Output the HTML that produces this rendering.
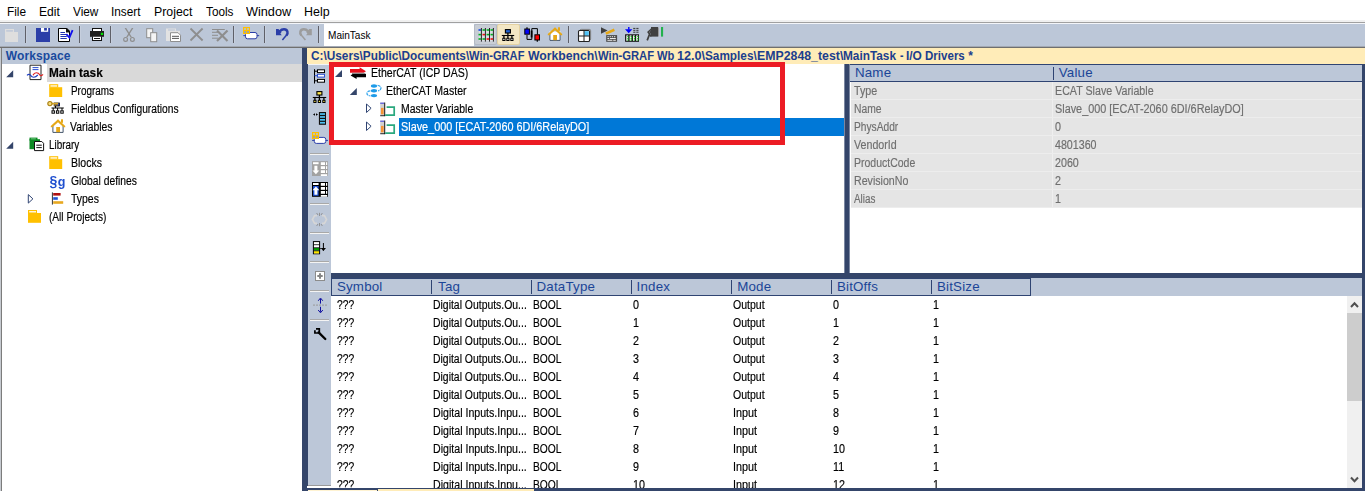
<!DOCTYPE html>
<html><head><meta charset="utf-8"><title>Win-GRAF Workbench</title>
<style>
html,body{margin:0;padding:0;}
body{width:1365px;height:491px;position:relative;overflow:hidden;background:#fff;font-family:"Liberation Sans",sans-serif;}
#app{position:absolute;left:0;top:0;width:1365px;height:491px;overflow:hidden;background:#fff;}
.ms{position:absolute;-webkit-text-stroke:0.18px;font-size:12.5px;line-height:18px;height:18px;white-space:pre;transform-origin:0 50%;display:block;}
.ms.b{font-weight:bold;}
.hd{position:absolute;letter-spacing:0.2px;font-size:13.33px;line-height:18px;height:18px;white-space:pre;color:#1B4597;display:block;}
.mn{position:absolute;font-size:12px;line-height:16px;top:4px;white-space:pre;color:#000;transform-origin:0 50%;display:block;}
.pb{position:absolute;font-size:12px;font-weight:bold;line-height:17px;white-space:pre;color:#1C3E8E;}
svg{position:absolute;overflow:visible;}
.gl{position:absolute;left:0;top:0;width:1365px;height:491px;will-change:transform;}
</style></head><body><div id="app">
<div style="position:absolute;left:0px;top:0px;width:1365px;height:20px;background:#fff;"></div>
<div style="position:absolute;left:0px;top:20px;width:1365px;height:2px;background:#F0F0F0;"></div>
<div style="position:absolute;left:0px;top:22px;width:1365px;height:1px;background:#A0A0A0;"></div>
<div style="position:absolute;left:0px;top:23px;width:1365px;height:1px;background:#F3F5F9;"></div>
<span class="mn" style="left:6.6px;transform:scaleX(0.9869)">File</span>
<span class="mn" style="left:38.6px;transform:scaleX(1.0062)">Edit</span>
<span class="mn" style="left:72.7px;transform:scaleX(0.9840)">View</span>
<span class="mn" style="left:111.4px;transform:scaleX(0.9822)">Insert</span>
<span class="mn" style="left:154.2px;transform:scaleX(1.0263)">Project</span>
<span class="mn" style="left:205.5px;transform:scaleX(0.9808)">Tools</span>
<span class="mn" style="left:246.2px;transform:scaleX(1.0583)">Window</span>
<span class="mn" style="left:304.2px;transform:scaleX(1.0349)">Help</span>
<div style="position:absolute;left:0px;top:24px;width:1365px;height:22px;background:#BCC7D8;"></div>
<div style="position:absolute;left:0px;top:46px;width:1365px;height:1px;background:#A3A9B3;"></div>
<div style="position:absolute;left:0px;top:47px;width:1365px;height:1px;background:#6F6F6F;"></div>
<div style="position:absolute;left:25px;top:26px;width:1px;height:17px;background:#5F6068;"></div>
<div style="position:absolute;left:26px;top:26px;width:1px;height:17px;background:#C6CFDE;"></div>
<div style="position:absolute;left:79px;top:26px;width:1px;height:17px;background:#5F6068;"></div>
<div style="position:absolute;left:80px;top:26px;width:1px;height:17px;background:#C6CFDE;"></div>
<div style="position:absolute;left:110px;top:26px;width:1px;height:17px;background:#5F6068;"></div>
<div style="position:absolute;left:111px;top:26px;width:1px;height:17px;background:#C6CFDE;"></div>
<div style="position:absolute;left:233px;top:26px;width:1px;height:17px;background:#5F6068;"></div>
<div style="position:absolute;left:234px;top:26px;width:1px;height:17px;background:#C6CFDE;"></div>
<div style="position:absolute;left:264px;top:26px;width:1px;height:17px;background:#5F6068;"></div>
<div style="position:absolute;left:265px;top:26px;width:1px;height:17px;background:#C6CFDE;"></div>
<div style="position:absolute;left:318px;top:26px;width:1px;height:17px;background:#5F6068;"></div>
<div style="position:absolute;left:319px;top:26px;width:1px;height:17px;background:#C6CFDE;"></div>
<div style="position:absolute;left:568px;top:26px;width:1px;height:17px;background:#5F6068;"></div>
<div style="position:absolute;left:569px;top:26px;width:1px;height:17px;background:#C6CFDE;"></div>
<div style="position:absolute;left:324px;top:24px;width:150px;height:22px;background:#fff;"></div>
<span style="position:absolute;left:327.5px;top:27px;font-size:10.6px;line-height:16px;color:#000;white-space:pre;transform:scaleX(0.95);transform-origin:0 50%">MainTask</span>
<div style="position:absolute;left:474px;top:24px;width:23px;height:21px;background:#C8CDD5;box-sizing:border-box;border:1px solid #B4BAC4;border-radius:2px;"></div>
<div style="position:absolute;left:497px;top:24px;width:23px;height:21px;background:#F3E7C4;box-sizing:border-box;border:1px solid #E3D1A2;border-radius:2px;"></div>
<div style="position:absolute;left:0px;top:48px;width:1px;height:443px;background:#C6CAD0;"></div>
<div style="position:absolute;left:1px;top:48px;width:1px;height:443px;background:#7C7C7C;"></div>
<div style="position:absolute;left:2px;top:48px;width:300px;height:16px;background:#BCC7D8;"></div>
<span class="pb" style="left:5.8px;top:47.8px;color:#1A4A9E;letter-spacing:0.1px">Workspace</span>
<div style="position:absolute;left:2px;top:64px;width:300px;height:427px;background:#fff;"></div>
<div style="position:absolute;left:47px;top:64px;width:255px;height:18px;background:#D9D9D9;"></div>
<div style="position:absolute;left:302px;top:48px;width:5px;height:443px;background:#34456A;"></div>
<div style="position:absolute;left:307px;top:64px;width:1px;height:427px;background:#34456A;"></div>
<div style="position:absolute;left:307px;top:48px;width:1058px;height:16px;background:#FFECB8;"></div>
<span class="pb" style="left:311.20px;top:47.8px;transform:scaleX(0.9844);transform-origin:0 50%;display:block">C:\Users\Public\Documents\</span>
<span class="pb" style="left:469.40px;top:47.8px;transform:scaleX(0.9255);transform-origin:0 50%;display:block">Win-GRAF </span>
<span class="pb" style="left:527.90px;top:47.8px;transform:scaleX(1.0182);transform-origin:0 50%;display:block">Workbench\</span>
<span class="pb" style="left:597.60px;top:47.8px;transform:scaleX(0.9365);transform-origin:0 50%;display:block">Win-GRAF </span>
<span class="pb" style="left:656.80px;top:47.8px;transform:scaleX(0.9277);transform-origin:0 50%;display:block">Wb </span>
<span class="pb" style="left:677.20px;top:47.8px;transform:scaleX(1.0528);transform-origin:0 50%;display:block">12.0\</span>
<span class="pb" style="left:705.30px;top:47.8px;transform:scaleX(0.9811);transform-origin:0 50%;display:block">Samples\</span>
<span class="pb" style="left:757.00px;top:47.8px;transform:scaleX(1.0268);transform-origin:0 50%;display:block">EMP2848_test\</span>
<span class="pb" style="left:843.30px;top:47.8px;transform:scaleX(0.9855);transform-origin:0 50%;display:block">MainTask </span>
<span class="pb" style="left:899.60px;top:47.8px;transform:scaleX(0.8731);transform-origin:0 50%;display:block">- </span>
<span class="pb" style="left:906.00px;top:47.8px;transform:scaleX(0.9930);transform-origin:0 50%;display:block">I/O </span>
<span class="pb" style="left:925.20px;top:47.8px;transform:scaleX(0.9621);transform-origin:0 50%;display:block">Drivers </span>
<span class="pb" style="left:968.20px;top:47.8px;transform:scaleX(1.0000);transform-origin:0 50%;display:block">*</span>
<div style="position:absolute;left:308px;top:64px;width:23px;height:422px;background:#BCC7D8;"></div>
<div style="position:absolute;left:308px;top:64px;width:23px;height:1px;background:#F2F4F8;"></div>
<div style="position:absolute;left:308px;top:485px;width:23px;height:1px;background:#9A9A9A;"></div>
<div style="position:absolute;left:310px;top:153px;width:19px;height:1px;background:#A8A8A8;"></div>
<div style="position:absolute;left:310px;top:154px;width:19px;height:1px;background:#F4F4F4;"></div>
<div style="position:absolute;left:310px;top:203px;width:19px;height:1px;background:#A8A8A8;"></div>
<div style="position:absolute;left:310px;top:204px;width:19px;height:1px;background:#F4F4F4;"></div>
<div style="position:absolute;left:310px;top:232px;width:19px;height:1px;background:#A8A8A8;"></div>
<div style="position:absolute;left:310px;top:233px;width:19px;height:1px;background:#F4F4F4;"></div>
<div style="position:absolute;left:310px;top:261px;width:19px;height:1px;background:#A8A8A8;"></div>
<div style="position:absolute;left:310px;top:262px;width:19px;height:1px;background:#F4F4F4;"></div>
<div style="position:absolute;left:310px;top:290px;width:19px;height:1px;background:#A8A8A8;"></div>
<div style="position:absolute;left:310px;top:291px;width:19px;height:1px;background:#F4F4F4;"></div>
<div style="position:absolute;left:310px;top:319px;width:19px;height:1px;background:#A8A8A8;"></div>
<div style="position:absolute;left:310px;top:320px;width:19px;height:1px;background:#F4F4F4;"></div>
<div style="position:absolute;left:331px;top:64px;width:513px;height:209px;background:#fff;"></div>
<div style="position:absolute;left:399px;top:118px;width:445px;height:18px;background:#0078D7;"></div>
<div style="position:absolute;left:844px;top:64px;width:1px;height:209px;background:#7B87A1;"></div>
<div style="position:absolute;left:845px;top:64px;width:4px;height:209px;background:#34456A;"></div>
<div style="position:absolute;left:849px;top:64px;width:1px;height:209px;background:#7B87A1;"></div>
<div style="position:absolute;left:850px;top:64px;width:512px;height:209px;background:#fff;"></div>
<div style="position:absolute;left:850px;top:64px;width:512px;height:18px;background:#2F4472;"></div>
<div style="position:absolute;left:850px;top:65px;width:512px;height:16px;background:#BCC7D8;"></div>
<div style="position:absolute;left:1053px;top:67px;width:1px;height:13px;background:#2F4472;"></div>
<span class="hd" style="left:854.9px;top:64.0px">Name</span>
<span class="hd" style="left:1058.7px;top:64.0px">Value</span>
<div style="position:absolute;left:851px;top:82px;width:512px;height:17px;background:#E5E5E5;"></div>
<div style="position:absolute;left:851px;top:99px;width:512px;height:1px;background:#EDEDED;"></div>
<div style="position:absolute;left:1052px;top:82px;width:1px;height:17px;background:#EFEFEF;"></div>
<div style="position:absolute;left:851px;top:100px;width:512px;height:17px;background:#E5E5E5;"></div>
<div style="position:absolute;left:851px;top:117px;width:512px;height:1px;background:#EDEDED;"></div>
<div style="position:absolute;left:1052px;top:100px;width:1px;height:17px;background:#EFEFEF;"></div>
<div style="position:absolute;left:851px;top:118px;width:512px;height:17px;background:#E5E5E5;"></div>
<div style="position:absolute;left:851px;top:135px;width:512px;height:1px;background:#EDEDED;"></div>
<div style="position:absolute;left:1052px;top:118px;width:1px;height:17px;background:#EFEFEF;"></div>
<div style="position:absolute;left:851px;top:136px;width:512px;height:17px;background:#E5E5E5;"></div>
<div style="position:absolute;left:851px;top:153px;width:512px;height:1px;background:#EDEDED;"></div>
<div style="position:absolute;left:1052px;top:136px;width:1px;height:17px;background:#EFEFEF;"></div>
<div style="position:absolute;left:851px;top:154px;width:512px;height:17px;background:#E5E5E5;"></div>
<div style="position:absolute;left:851px;top:171px;width:512px;height:1px;background:#EDEDED;"></div>
<div style="position:absolute;left:1052px;top:154px;width:1px;height:17px;background:#EFEFEF;"></div>
<div style="position:absolute;left:851px;top:172px;width:512px;height:17px;background:#E5E5E5;"></div>
<div style="position:absolute;left:851px;top:189px;width:512px;height:1px;background:#EDEDED;"></div>
<div style="position:absolute;left:1052px;top:172px;width:1px;height:17px;background:#EFEFEF;"></div>
<div style="position:absolute;left:851px;top:190px;width:512px;height:17px;background:#E5E5E5;"></div>
<div style="position:absolute;left:851px;top:207px;width:512px;height:1px;background:#EDEDED;"></div>
<div style="position:absolute;left:1052px;top:190px;width:1px;height:17px;background:#EFEFEF;"></div>
<div style="position:absolute;left:1362px;top:64px;width:3px;height:427px;background:#34456A;"></div>
<div style="position:absolute;left:331px;top:273px;width:1034px;height:5px;background:#34456A;"></div>
<div style="position:absolute;left:331px;top:278px;width:1031px;height:18px;background:#BCC7D8;"></div>
<div style="position:absolute;left:331px;top:278px;width:700px;height:18px;background:#2F4472;"></div>
<div style="position:absolute;left:332px;top:279px;width:698px;height:16px;background:#BCC7D8;"></div>
<div style="position:absolute;left:431px;top:280px;width:1px;height:14px;background:#2F4472;"></div>
<div style="position:absolute;left:531px;top:280px;width:1px;height:14px;background:#2F4472;"></div>
<div style="position:absolute;left:631px;top:280px;width:1px;height:14px;background:#2F4472;"></div>
<div style="position:absolute;left:731px;top:280px;width:1px;height:14px;background:#2F4472;"></div>
<div style="position:absolute;left:831px;top:280px;width:1px;height:14px;background:#2F4472;"></div>
<div style="position:absolute;left:931px;top:280px;width:1px;height:14px;background:#2F4472;"></div>
<span class="hd" style="left:336.9px;top:278.3px">Symbol</span>
<span class="hd" style="left:438.1px;top:278.3px">Tag</span>
<span class="hd" style="left:536.5px;top:278.3px">DataType</span>
<span class="hd" style="left:636.6px;top:278.3px">Index</span>
<span class="hd" style="left:737.2px;top:278.3px">Mode</span>
<span class="hd" style="left:836.9px;top:278.3px">BitOffs</span>
<span class="hd" style="left:936.9px;top:278.3px">BitSize</span>
<div style="position:absolute;left:331px;top:296px;width:1016px;height:192px;background:#fff;"></div>
<div style="position:absolute;left:1347px;top:296px;width:15px;height:192px;background:#F0F0F0;"></div>
<div style="position:absolute;left:1347px;top:313px;width:15px;height:88px;background:#CDCDCD;"></div>
<svg style="left:1347px;top:296px" width="15" height="17" viewBox="0 0 15 17"><path d="M4 11 L7.5 7.2 L11 11" fill="none" stroke="#505050" stroke-width="2"/></svg>
<svg style="left:1347px;top:471px" width="15" height="17" viewBox="0 0 15 17"><path d="M4 6.5 L7.5 10.3 L11 6.5" fill="none" stroke="#505050" stroke-width="2"/></svg>
<div style="position:absolute;left:307px;top:486px;width:24px;height:2px;background:#fff;"></div>
<div style="position:absolute;left:329px;top:62px;width:456px;height:83px;box-sizing:border-box;border:5px solid #EC1C24;"></div>
<svg style="left:0;top:0" width="1365" height="491" viewBox="0 0 1365 491"><rect x="5" y="29" width="9" height="3" fill="#DEDEDE" /><rect x="5" y="32" width="13" height="10" fill="#DEDEDE" /><rect x="6.2" y="30.2" width="6.7" height="1.4" fill="#BCC6D8" /><rect x="36" y="28" width="14" height="14" fill="#2B3EA8" /><rect x="41" y="28" width="7.2" height="3.8" fill="#fff" /><rect x="44.1" y="28" width="2.8" height="2.6" fill="#2B3EA8" /><path d="M58.5 28.5 H66.5 L69.5 31.5 V41.5 H58.5 Z" fill="#fff" stroke="#000" stroke-width="1" /><path d="M66 28 H67 L70 31 V32.5 H66 Z" fill="#111" /><line x1="60.4" y1="32.5" x2="65" y2="32.5" stroke="#2233B0" stroke-width="1" /><line x1="60.4" y1="34.5" x2="66.8" y2="34.5" stroke="#2233B0" stroke-width="1" /><line x1="60.4" y1="36.5" x2="66.8" y2="36.5" stroke="#2233B0" stroke-width="1" /><line x1="60.4" y1="38.5" x2="66.8" y2="38.5" stroke="#2233B0" stroke-width="1" /><path d="M66.3 34.2 L69.4 37.6 L72.6 30.2" fill="none" stroke="#1010F0" stroke-width="1.8" stroke-linejoin="miter"/><rect x="92" y="28" width="10" height="4" fill="#111" /><rect x="93" y="29" width="8" height="2.2" fill="#fff" /><rect x="90" y="31" width="14" height="5.8" fill="#202020" /><rect x="92" y="36.6" width="10" height="4.4" fill="#111" /><rect x="93" y="36.8" width="8" height="3.2" fill="#fff" /><rect x="94" y="38" width="6" height="1" fill="#111" /><rect x="100.8" y="32.8" width="2.4" height="2.2" fill="#00E000" /><path d="M124.6 28 L126.2 28 L131.8 37 L130.6 37.6 Z" fill="#8E8E8E" /><path d="M133.4 28 L131.8 28 L126.2 37 L127.4 37.6 Z" fill="#8E8E8E" /><circle cx="125.6" cy="39.4" r="1.9" fill="none" stroke="#8E8E8E" stroke-width="1.2"/><circle cx="132.4" cy="39.4" r="1.9" fill="none" stroke="#8E8E8E" stroke-width="1.2"/><rect x="146.7" y="28.7" width="6" height="9" fill="#F4F4F4" stroke="#8E8E8E" stroke-width="1"/><rect x="150.7" y="32.7" width="6" height="9" fill="#F4F4F4" stroke="#8E8E8E" stroke-width="1"/><rect x="166" y="28.5" width="10" height="3" fill="#E2E2E2" /><rect x="166" y="30.8" width="14" height="10.2" fill="#E2E2E2" /><rect x="168" y="29.3" width="7" height="1.4" fill="#C4CCDA" /><path d="M170.5 32.7 H178 L180.5 35.2 V41.5 H170.5 Z" fill="#fff" stroke="#8E8E8E" stroke-width="1" /><line x1="172" y1="36.3" x2="179" y2="36.3" stroke="#555" stroke-width="1" /><line x1="172" y1="38.4" x2="179" y2="38.4" stroke="#555" stroke-width="1" /><line x1="190.5" y1="28.5" x2="202.6" y2="40.5" stroke="#8E8E8E" stroke-width="1.8" /><line x1="202.6" y1="28.5" x2="190.5" y2="40.5" stroke="#8E8E8E" stroke-width="1.8" /><line x1="212" y1="29.5" x2="224.8" y2="29.5" stroke="#8E8E8E" stroke-width="1" /><line x1="212" y1="32.3" x2="218.5" y2="32.3" stroke="#8E8E8E" stroke-width="1" /><line x1="212" y1="35.3" x2="218" y2="35.3" stroke="#8E8E8E" stroke-width="1" /><line x1="212" y1="38.2" x2="218.6" y2="38.2" stroke="#8E8E8E" stroke-width="1" /><line x1="217" y1="30.6" x2="227.5" y2="41" stroke="#8E8E8E" stroke-width="2.1" /><line x1="227.5" y1="30.6" x2="217" y2="41" stroke="#8E8E8E" stroke-width="2.1" /><line x1="243.3" y1="35.65" x2="259.2" y2="35.65" stroke="#2B3EA8" stroke-width="1" /><rect x="245.5" y="32.5" width="11.5" height="6.3" fill="#fff" rx="2" ry="2" stroke="#2B3EA8" stroke-width="1"/><rect x="243" y="27" width="7" height="7" fill="#FFC000" /><rect x="244.1" y="28.1" width="1.8" height="1.8" fill="#B9C2D2" /><rect x="247.1" y="28.1" width="1.8" height="1.8" fill="#B9C2D2" /><rect x="244.1" y="31.1" width="1.8" height="1.8" fill="#8E9CC4" /><rect x="247.1" y="31.1" width="1.8" height="1.8" fill="#8E9CC4" /><g transform="translate(276,28)"><path d="M0 1 L0 7.2 L5.8 7.2 L4.4 5.6 L5.6 4 L2.4 1 Z" fill="#2B3EA8"/><path d="M3.8 3.2 C6 0.6 10.4 0.4 11.4 3.6 C11.9 5.2 11.4 6.4 10.4 7.4" fill="none" stroke="#2B3EA8" stroke-width="2.5"/><path d="M11 6.6 L6.4 12" fill="none" stroke="#2B3EA8" stroke-width="1.5"/></g><g transform="translate(311.8,28) scale(-1,1)"><path d="M0 1 L0 7.2 L5.8 7.2 L4.4 5.6 L5.6 4 L2.4 1 Z" fill="#9C9C9C"/><path d="M3.8 3.2 C6 0.6 10.4 0.4 11.4 3.6 C11.9 5.2 11.4 6.4 10.4 7.4" fill="none" stroke="#9C9C9C" stroke-width="2.5"/><path d="M11 6.6 L6.4 12" fill="none" stroke="#9C9C9C" stroke-width="1.5"/></g><rect x="479" y="29" width="15.5" height="12" fill="#DADDE2" /><rect x="478.5" y="29.2" width="2.4" height="1.6" fill="#1040E0" /><rect x="478.5" y="33.8" width="2.4" height="1.6" fill="#00B020" /><rect x="478.5" y="38.2" width="2.4" height="1.6" fill="#00B020" /><line x1="481.4" y1="28" x2="481.4" y2="41.6" stroke="#111" stroke-width="0.9" /><rect x="482.5" y="29.2" width="2.4" height="1.6" fill="#00B020" /><rect x="482.5" y="33.8" width="2.4" height="1.6" fill="#F01010" /><rect x="482.5" y="38.2" width="2.4" height="1.6" fill="#00B020" /><line x1="485.4" y1="28" x2="485.4" y2="41.6" stroke="#111" stroke-width="0.9" /><rect x="486.6" y="29.2" width="2.4" height="1.6" fill="#00B020" /><rect x="486.6" y="33.8" width="2.4" height="1.6" fill="#00B020" /><rect x="486.6" y="38.2" width="2.4" height="1.6" fill="#F01010" /><line x1="489.5" y1="28" x2="489.5" y2="41.6" stroke="#111" stroke-width="0.9" /><rect x="490.5" y="29.2" width="2.4" height="1.6" fill="#00B020" /><rect x="490.5" y="33.8" width="2.4" height="1.6" fill="#00B020" /><rect x="490.5" y="38.2" width="2.4" height="1.6" fill="#F01010" /><line x1="493.4" y1="28" x2="493.4" y2="41.6" stroke="#111" stroke-width="0.9" /><rect x="505.4" y="29.6" width="5" height="3.4" fill="#2060D0" stroke="#000" stroke-width="1.1"/><line x1="507.9" y1="33.0" x2="507.9" y2="35.6" stroke="#000" stroke-width="1.3" /><line x1="501.79999999999995" y1="35.5" x2="514.1999999999999" y2="35.5" stroke="#000" stroke-width="1.1" /><line x1="503.9" y1="35.6" x2="503.9" y2="38.1" stroke="#000" stroke-width="1.3" /><rect x="502.29999999999995" y="37.8" width="3.2" height="3.2" fill="#000" /><rect x="503.29999999999995" y="38.8" width="1.2" height="1.2" fill="#fff" /><line x1="507.9" y1="35.6" x2="507.9" y2="38.1" stroke="#000" stroke-width="1.3" /><rect x="506.29999999999995" y="37.8" width="3.2" height="3.2" fill="#000" /><rect x="507.29999999999995" y="38.8" width="1.2" height="1.2" fill="#fff" /><line x1="511.9" y1="35.6" x2="511.9" y2="38.1" stroke="#000" stroke-width="1.3" /><rect x="510.29999999999995" y="37.8" width="3.2" height="3.2" fill="#000" /><rect x="511.29999999999995" y="38.8" width="1.2" height="1.2" fill="#fff" /><path d="M527 35 V39.4 H531.8 V28.6 H537.4 V34.5" fill="none" stroke="#000" stroke-width="1" /><line x1="531.6" y1="30.5" x2="531.6" y2="37.5" stroke="#000" stroke-width="1.8" /><rect x="524.8" y="29" width="4.6" height="5.2" fill="#0000FF" stroke="#000" stroke-width="1"/><line x1="527" y1="27.3" x2="527" y2="29" stroke="#000" stroke-width="1.2" /><rect x="534.9" y="34.8" width="4.6" height="5.2" fill="#FF0000" stroke="#000" stroke-width="1"/><line x1="537.3" y1="40" x2="537.3" y2="41.8" stroke="#000" stroke-width="1.2" /><rect x="549.4" y="31.5" width="11.1" height="9.2" fill="#fff" /><path d="M549.9 34 V40.4 H560.1 V34" fill="none" stroke="#44546A" stroke-width="1" /><rect x="553.2" y="35" width="3.8" height="5.2" fill="#E6A817" /><rect x="558" y="27.3" width="2" height="3.5" fill="#E6A817" /><path d="M555 27.2 L562.2 34 L562.2 35.2 L560.6 35.2 L555 30.2 L549.4 35.2 L547.8 35.2 L547.8 34 Z" fill="#E6A817" /><rect x="580" y="29.4" width="10.6" height="10.8" fill="#F2F2F2" rx="1.2" stroke="#555" stroke-width="0.7"/><rect x="578.5" y="30.5" width="11" height="11" fill="#fff" rx="1" stroke="#222" stroke-width="1.1"/><rect x="584.2" y="31.2" width="4.6" height="4.6" fill="#4FC3F7" /><line x1="584" y1="30.5" x2="584" y2="41.5" stroke="#222" stroke-width="1" /><line x1="578.5" y1="36" x2="589.5" y2="36" stroke="#222" stroke-width="1" /><path d="M601 27.2 L607.6 30.4 L601 33.7 Z" fill="#404040" /><line x1="605.8" y1="33.6" x2="614.4" y2="29.8" stroke="#E6A817" stroke-width="2.6" /><rect x="606.2" y="35.1" width="10.9" height="6.7" fill="#4A4A4A" /><rect x="607.4" y="36.2" width="1.3" height="1" fill="#E8E8E8" /><rect x="609.6" y="36.2" width="1.3" height="1" fill="#E8E8E8" /><rect x="611.8" y="36.2" width="1.3" height="1" fill="#E8E8E8" /><rect x="614" y="36.2" width="1.3" height="1" fill="#E8E8E8" /><rect x="607.4" y="38" width="1.6" height="1" fill="#E8E8E8" /><rect x="609.8" y="38" width="6" height="1" fill="#E8E8E8" /><rect x="607.4" y="39.8" width="5" height="1" fill="#E8E8E8" /><rect x="613.2" y="39.8" width="2.6" height="1" fill="#E8E8E8" /><rect x="628.1" y="27" width="1.4" height="2.6" fill="#0000FF" /><path d="M625 29.3 H632.4 L628.7 33.2 Z" fill="#0000FF" /><line x1="633.2" y1="28.4" x2="638.8" y2="28.4" stroke="#333" stroke-width="1" stroke-dasharray="2.2 0.9"/><line x1="633.2" y1="30.3" x2="638.8" y2="30.3" stroke="#333" stroke-width="1" stroke-dasharray="2.2 0.9"/><line x1="633.2" y1="32.2" x2="638.8" y2="32.2" stroke="#333" stroke-width="1" stroke-dasharray="2.2 0.9"/><rect x="625.1" y="34.3" width="13.9" height="7.5" fill="#111" /><rect x="626.3" y="35.4" width="1.9" height="5.4" fill="#fff" /><rect x="627.1999999999999" y="36.2" width="1.5" height="0.9" fill="#00B000" /><rect x="627.1999999999999" y="37.9" width="1.5" height="0.9" fill="#00B000" /><rect x="627.1999999999999" y="39.6" width="1.5" height="0.9" fill="#00B000" /><rect x="629.6" y="35.4" width="1.9" height="5.4" fill="#fff" /><rect x="630.5" y="36.2" width="1.5" height="0.9" fill="#00B000" /><rect x="630.5" y="37.9" width="1.5" height="0.9" fill="#00B000" /><rect x="630.5" y="39.6" width="1.5" height="0.9" fill="#00B000" /><rect x="632.9" y="35.4" width="1.9" height="5.4" fill="#fff" /><rect x="633.8" y="36.2" width="1.5" height="0.9" fill="#00B000" /><rect x="633.8" y="37.9" width="1.5" height="0.9" fill="#00B000" /><rect x="633.8" y="39.6" width="1.5" height="0.9" fill="#00B000" /><rect x="636.2" y="35.4" width="1.9" height="5.4" fill="#fff" /><rect x="637.1" y="36.2" width="1.5" height="0.9" fill="#00B000" /><rect x="637.1" y="37.9" width="1.5" height="0.9" fill="#00B000" /><rect x="637.1" y="39.6" width="1.5" height="0.9" fill="#00B000" /><rect x="651" y="27" width="7" height="9.6" fill="#404040" /><rect x="658" y="27.5" width="1" height="9" fill="#9A9A9A" /><path d="M652.5 28 L648.2 32 L649.6 34 L647.2 40.4" fill="none" stroke="#404040" stroke-width="1.7" /><path d="M651 31 L649.6 34.2 L651 36.6" fill="none" stroke="#404040" stroke-width="1.4" /><rect x="661" y="27" width="2.1" height="9.6" fill="#22B14C" /><line x1="314.5" y1="69.2" x2="314.5" y2="83.5" stroke="#000" stroke-width="1" /><rect x="317.5" y="69.8" width="7" height="2.8" fill="#fff" stroke="#000" stroke-width="1"/><line x1="314.5" y1="71.2" x2="317.5" y2="71.2" stroke="#000" stroke-width="1" /><rect x="317.5" y="74.3" width="7" height="2.8" fill="#fff" stroke="#2B4FD0" stroke-width="1"/><line x1="314.5" y1="75.7" x2="317.5" y2="75.7" stroke="#2B4FD0" stroke-width="1" /><rect x="317.5" y="79.4" width="7" height="2.8" fill="#fff" stroke="#000" stroke-width="1"/><line x1="314.5" y1="80.8" x2="317.5" y2="80.8" stroke="#000" stroke-width="1" /><rect x="316.9" y="91.6" width="5" height="3.4" fill="#FFE84A" stroke="#000" stroke-width="1.1"/><line x1="319.4" y1="95.0" x2="319.4" y2="97.6" stroke="#000" stroke-width="1.3" /><line x1="312.79999999999995" y1="97.5" x2="326.2" y2="97.5" stroke="#000" stroke-width="1.1" /><line x1="314.9" y1="97.6" x2="314.9" y2="100.1" stroke="#000" stroke-width="1.3" /><rect x="313.29999999999995" y="99.8" width="3.2" height="3.2" fill="#000" /><rect x="314.29999999999995" y="100.8" width="1.2" height="1.2" fill="#FFE84A" /><line x1="319.4" y1="97.6" x2="319.4" y2="100.1" stroke="#000" stroke-width="1.3" /><rect x="317.79999999999995" y="99.8" width="3.2" height="3.2" fill="#000" /><rect x="318.79999999999995" y="100.8" width="1.2" height="1.2" fill="#FFE84A" /><line x1="323.9" y1="97.6" x2="323.9" y2="100.1" stroke="#000" stroke-width="1.3" /><rect x="322.29999999999995" y="99.8" width="3.2" height="3.2" fill="#000" /><rect x="323.29999999999995" y="100.8" width="1.2" height="1.2" fill="#FFE84A" /><rect x="318.9" y="112" width="7.1" height="12.8" fill="#111" /><rect x="320" y="113.2" width="5" height="1.7" fill="#4FC3F7" /><rect x="320" y="116.1" width="5" height="1.7" fill="#4FC3F7" /><rect x="320" y="119" width="5" height="1.7" fill="#4FC3F7" /><rect x="320" y="121.9" width="5" height="1.7" fill="#4FC3F7" /><path d="M313 114.5 L315 113.2 V115.8 Z" fill="#000" /><path d="M318 114.5 L316 113.2 V115.8 Z" fill="#000" /><line x1="312.1" y1="140.4" x2="328.0" y2="140.4" stroke="#2B3EA8" stroke-width="1" /><rect x="314.3" y="137.4" width="11.5" height="6" fill="#fff" rx="2" ry="2" stroke="#2B3EA8" stroke-width="1"/><rect x="312" y="132" width="7" height="7" fill="#FFC000" /><rect x="313.1" y="133.1" width="1.8" height="1.8" fill="#B9C2D2" /><rect x="316.1" y="133.1" width="1.8" height="1.8" fill="#B9C2D2" /><rect x="313.1" y="136.1" width="1.8" height="1.8" fill="#8E9CC4" /><rect x="316.1" y="136.1" width="1.8" height="1.8" fill="#8E9CC4" /><rect x="312" y="161.2" width="16" height="14.8" fill="#A2A2A2" /><rect x="313" y="162.2" width="5.6" height="2" fill="#fff" /><rect x="313" y="165.2" width="5.6" height="9.8" fill="#A2A2A2" /><path d="M315.9 174.2 L319.3 170.39999999999998 H317.4 V165.79999999999998 H314.4 V170.39999999999998 H312.5 Z" fill="#fff" /><rect x="320.8" y="162.2" width="4.2" height="2.8" fill="#fff" /><rect x="326" y="162.2" width="1.2" height="2.8" fill="#fff" /><rect x="320.8" y="166.2" width="4.2" height="2.8" fill="#fff" /><rect x="326" y="166.2" width="1.2" height="2.8" fill="#fff" /><rect x="320.8" y="170.2" width="4.2" height="2.8" fill="#fff" /><rect x="326" y="170.2" width="1.2" height="2.8" fill="#fff" /><rect x="320.8" y="174.2" width="6.4" height="1.8" fill="#fff" /><rect x="312" y="182" width="16" height="14.8" fill="#000" /><rect x="313" y="183" width="5.6" height="2" fill="#fff" /><rect x="313" y="186" width="5.6" height="9.8" fill="#1E50D0" /><path d="M315.9 186.4 L319.3 190.2 H317.4 V194.8 H314.4 V190.2 H312.5 Z" fill="#fff" /><rect x="320.8" y="183" width="4.2" height="2.8" fill="#fff" /><rect x="326" y="183" width="1.2" height="2.8" fill="#fff" /><rect x="320.8" y="187" width="4.2" height="2.8" fill="#fff" /><rect x="326" y="187" width="1.2" height="2.8" fill="#fff" /><rect x="320.8" y="191" width="4.2" height="2.8" fill="#fff" /><rect x="326" y="191" width="1.2" height="2.8" fill="#fff" /><rect x="320.8" y="195" width="6.4" height="1.8" fill="#fff" /><path d="M317 215.6 H314.6 L312.4 219.5 L314.6 223.4 H317" fill="none" stroke="#D6D6D6" stroke-width="1.6" /><path d="M322 215.6 H324.4 L326.6 219.5 L324.4 223.4 H322" fill="none" stroke="#D6D6D6" stroke-width="1.6" /><line x1="319.5" y1="212.8" x2="319.5" y2="216" stroke="#8C8C8C" stroke-width="0.9" /><line x1="316.6" y1="213" x2="318" y2="215" stroke="#8C8C8C" stroke-width="0.9" /><line x1="322.4" y1="213" x2="321" y2="215" stroke="#8C8C8C" stroke-width="0.9" /><line x1="319.5" y1="223" x2="319.5" y2="226.2" stroke="#8C8C8C" stroke-width="0.9" /><line x1="316.6" y1="226" x2="318" y2="224" stroke="#8C8C8C" stroke-width="0.9" /><line x1="322.4" y1="226" x2="321" y2="224" stroke="#8C8C8C" stroke-width="0.9" /><rect x="313.4" y="241.6" width="6.2" height="12.2" fill="#fff" stroke="#000" stroke-width="1"/><rect x="314" y="248" width="5" height="2.6" fill="#00A000" /><rect x="314" y="251" width="5" height="2.4" fill="#FFE800" /><line x1="313.4" y1="244.7" x2="319.6" y2="244.7" stroke="#000" stroke-width="0.8" /><line x1="313.4" y1="247.7" x2="319.6" y2="247.7" stroke="#000" stroke-width="0.8" /><line x1="313.4" y1="250.8" x2="319.6" y2="250.8" stroke="#000" stroke-width="0.8" /><line x1="323.4" y1="243" x2="323.4" y2="250.6" stroke="#000" stroke-width="1" /><path d="M320.8 248 H326 L323.4 251 Z" fill="#000" /><line x1="319.6" y1="248.6" x2="321.5" y2="248.6" stroke="#000" stroke-width="0.8" /><rect x="315.5" y="271.5" width="9" height="9" fill="#fff" stroke="#8C8C8C" stroke-width="1"/><line x1="317.3" y1="276" x2="322.7" y2="276" stroke="#858585" stroke-width="2" /><line x1="320" y1="273.3" x2="320" y2="278.7" stroke="#858585" stroke-width="2" /><line x1="320.5" y1="299" x2="320.5" y2="303.6" stroke="#1010A0" stroke-width="1" /><path d="M318.2 300.8 L320.5 298 L322.8 300.8" fill="none" stroke="#1010A0" stroke-width="1" /><line x1="320.5" y1="306.8" x2="320.5" y2="311.8" stroke="#1010A0" stroke-width="1" /><path d="M318.2 310 L320.5 312.8 L322.8 310" fill="none" stroke="#1010A0" stroke-width="1" /><line x1="313.2" y1="305.2" x2="327" y2="305.2" stroke="#9A9A9A" stroke-width="1.2" stroke-dasharray="1.6 1.4"/><line x1="318.6" y1="332.4" x2="325.3" y2="339" stroke="#000" stroke-width="2.3" stroke-linecap="round"/><path d="M316 328.9 H319.3 V333 H314.9 V330.2" fill="none" stroke="#000" stroke-width="1.7" /><path d="M6.2 77.2 H13.2 V70.2 Z" fill="#34456A" /><path d="M6.2 148.8 H13.2 V141.8 Z" fill="#34456A" /><path d="M28.3 194.6 V203.1 L32.9 198.85 Z" fill="#fff" stroke="#2F4472" stroke-width="1" /><path d="M30 65.2 H41 V79.6 H30 Z" fill="#fff" stroke="#222" stroke-width="1" /><line x1="32.5" y1="67.6" x2="38.5" y2="67.6" stroke="#2B4FD0" stroke-width="1" /><line x1="32.5" y1="69.6" x2="38.5" y2="69.6" stroke="#2B4FD0" stroke-width="1" /><path d="M27 75.4 C28.4 74 29.6 74.2 30.6 75.4 C32.2 77.9 35.2 77.9 37.8 75" fill="none" stroke="#2040C0" stroke-width="1.2" /><path d="M33 75.3 C34.6 72 38 72 39.7 74.8 C40.7 76 41.7 76 43 74.4" fill="none" stroke="#E02020" stroke-width="1.2" /><rect x="49.2" y="84.2" width="9" height="3.2" fill="#FFC000" /><rect x="49.2" y="87.2" width="13" height="9.8" fill="#FFC000" /><rect x="50.400000000000006" y="85.2" width="6.8" height="1.5" fill="#FFF6DC" /><rect x="49.2" y="156.2" width="9" height="3.2" fill="#FFC000" /><rect x="49.2" y="159.2" width="13" height="9.8" fill="#FFC000" /><rect x="50.400000000000006" y="157.2" width="6.8" height="1.5" fill="#FFF6DC" /><rect x="28" y="210" width="9" height="3.2" fill="#FFC000" /><rect x="28" y="213" width="13" height="9.8" fill="#FFC000" /><rect x="29.2" y="211" width="6.8" height="1.5" fill="#FFF6DC" /><line x1="55.5" y1="105.6" x2="55.5" y2="108" stroke="#000" stroke-width="1" /><line x1="51.5" y1="108" x2="63.8" y2="108" stroke="#000" stroke-width="1" /><rect x="54.2" y="103" width="5.2" height="3" fill="#2040C0" stroke="#000" stroke-width="0.8"/><line x1="53.2" y1="108" x2="53.2" y2="110.6" stroke="#000" stroke-width="1" /><rect x="52.0" y="110.8" width="2.4" height="2.4" fill="#fff" stroke="#000" stroke-width="1"/><line x1="57.6" y1="108" x2="57.6" y2="110.6" stroke="#000" stroke-width="1" /><rect x="56.4" y="110.8" width="2.4" height="2.4" fill="#fff" stroke="#000" stroke-width="1"/><line x1="62" y1="108" x2="62" y2="110.6" stroke="#000" stroke-width="1" /><rect x="60.8" y="110.8" width="2.4" height="2.4" fill="#fff" stroke="#000" stroke-width="1"/><rect x="51.4" y="102.8" width="6.8" height="1.7" fill="#D9A92A" /><rect x="54.2" y="104.3" width="1.3" height="1.6" fill="#B98A14" /><rect x="56.4" y="104.3" width="1.2" height="1.4" fill="#B98A14" /><circle cx="49.9" cy="103.6" r="2.1" fill="#F6DC7A" stroke="#A87E10" stroke-width="1.1"/><rect x="52.4" y="123.5" width="11.1" height="9.2" fill="#fff" /><path d="M52.9 126 V132.4 H63.1 V126" fill="none" stroke="#44546A" stroke-width="1" /><rect x="56.2" y="127" width="3.8" height="5.2" fill="#E6A817" /><rect x="61" y="119.3" width="2" height="3.5" fill="#E6A817" /><path d="M58 119.2 L65.2 126 L65.2 127.2 L63.6 127.2 L58 122.2 L52.4 127.2 L50.8 127.2 L50.8 126 Z" fill="#E6A817" /><rect x="29.5" y="137.6" width="8" height="3" fill="#0C8A24" /><rect x="29.5" y="139.2" width="10.5" height="10" fill="#0C8A24" /><rect x="30.8" y="138.4" width="5" height="0.9" fill="#7ED08A" /><path d="M34.5 141.5 H41.8 L43.6 143.3 V150.6 H34.5 Z" fill="#fff" stroke="#111" stroke-width="1" /><line x1="36.3" y1="145.2" x2="41.8" y2="145.2" stroke="#111" stroke-width="1" /><line x1="36.3" y1="147.6" x2="41.8" y2="147.6" stroke="#111" stroke-width="1" /><line x1="52.4" y1="192.4" x2="52.4" y2="204.6" stroke="#333" stroke-width="1" /><rect x="53.2" y="193" width="7.4" height="2.6" fill="#B01010" /><rect x="53.2" y="197.2" width="4.6" height="2.6" fill="#2050D0" /><rect x="53.2" y="201.2" width="10" height="2.6" fill="#E8A820" /><path d="M335 77 H342 V70 Z" fill="#34456A" /><path d="M349.8 95 H356.8 V88 Z" fill="#34456A" /><path d="M366.5 104 V112.5 L371.1 108.25 Z" fill="#fff" stroke="#2F4472" stroke-width="1" /><path d="M366.5 122 V130.5 L371.1 126.25 Z" fill="#fff" stroke="#2F4472" stroke-width="1" /><path d="M350 69 H359.6 V67.2 L366 71.2 L363.6 72.8 H350 Z" fill="#E8101C" /><rect x="352" y="72.8" width="13.4" height="1.2" fill="#8A8A8A" /><path d="M366 74 H352.6 L350.6 75.6 L356.6 79 V77.2 H366 Z" fill="#000" /><ellipse cx="374" cy="86" rx="3.1" ry="1.7" fill="#1E9BE8"/><ellipse cx="374" cy="90.7" rx="3.1" ry="1.7" fill="#1E9BE8"/><ellipse cx="374" cy="95.6" rx="3.1" ry="1.7" fill="#1E9BE8"/><path d="M377.6 85.4 C382 85.6 382 90.4 378 90.8" fill="none" stroke="#38A8EE" stroke-width="1.3" stroke-dasharray="3 0.8"/><path d="M370.4 90.8 C365.8 91 365.8 95.8 370.4 95.8" fill="none" stroke="#38A8EE" stroke-width="1.3" stroke-dasharray="3 0.8"/><rect x="380.2" y="102.5" width="4" height="13" fill="#D0D0D0" /><rect x="380.2" y="102.7" width="4" height="1" fill="#4040E0" /><rect x="381.0" y="107.9" width="2.6" height="6.4" fill="#F79433" /><rect x="384.2" y="102.5" width="1" height="13.6" fill="#111" /><rect x="380.2" y="115.3" width="5" height="0.9" fill="#111" /><path d="M386.59999999999997 107.1 H394.2 V115.1 H385.2" fill="none" stroke="#2AA87E" stroke-width="1.7" /><rect x="380.2" y="120.5" width="4" height="13" fill="#D0D0D0" /><rect x="380.2" y="120.7" width="4" height="1" fill="#4040E0" /><rect x="381.0" y="125.9" width="2.6" height="6.4" fill="#F79433" /><rect x="384.2" y="120.5" width="1" height="13.6" fill="#111" /><rect x="380.2" y="133.3" width="5" height="0.9" fill="#111" /><path d="M386.59999999999997 125.1 H394.2 V133.1 H385.2" fill="none" stroke="#2AA87E" stroke-width="1.7" /></svg>
<div class="gl">
<span class="ms b" style="left:49.3px;top:64.0px;color:#000;transform:scaleX(0.9427);">Main task</span>
<span class="ms" style="left:70.5px;top:82.0px;color:#000;transform:scaleX(0.7918);">Programs</span>
<span class="ms" style="left:70.5px;top:100.0px;color:#000;transform:scaleX(0.8193);">Fieldbus Configurations</span>
<span class="ms" style="left:70.0px;top:118.0px;color:#000;transform:scaleX(0.8303);">Variables</span>
<span class="ms" style="left:49.3px;top:136.0px;color:#000;transform:scaleX(0.7904);">Library</span>
<span class="ms" style="left:70.5px;top:154.0px;color:#000;transform:scaleX(0.8420);">Blocks</span>
<span class="ms" style="left:70.5px;top:172.0px;color:#000;transform:scaleX(0.8259);">Global defines</span>
<span class="ms" style="left:70.5px;top:190.0px;color:#000;transform:scaleX(0.8366);">Types</span>
<span class="ms" style="left:49.3px;top:208.0px;color:#000;transform:scaleX(0.8088);">(All Projects)</span>
<span class="ms" style="left:371.0px;top:64.0px;color:#000;transform:scaleX(0.8438);">EtherCAT (ICP DAS)</span>
<span class="ms" style="left:385.8px;top:82.0px;color:#000;transform:scaleX(0.8449);">EtherCAT Master</span>
<span class="ms" style="left:401.2px;top:100.0px;color:#000;transform:scaleX(0.8336);">Master Variable</span>
<span class="ms" style="left:401.2px;top:118.0px;color:#fff;transform:scaleX(0.8668);">Slave_000 [ECAT-2060 6DI/6RelayDO]</span>
<span class="ms" style="left:854.4px;top:82.0px;color:#6F6F6F;transform:scaleX(0.8561);">Type</span>
<span class="ms" style="left:1055.0px;top:82.0px;color:#6F6F6F;transform:scaleX(0.8549);">ECAT Slave Variable</span>
<span class="ms" style="left:854.4px;top:100.0px;color:#6F6F6F;transform:scaleX(0.8247);">Name</span>
<span class="ms" style="left:1055.0px;top:100.0px;color:#6F6F6F;transform:scaleX(0.8686);">Slave_000 [ECAT-2060 6DI/6RelayDO]</span>
<span class="ms" style="left:854.4px;top:118.0px;color:#6F6F6F;transform:scaleX(0.8156);">PhysAddr</span>
<span class="ms" style="left:1055.0px;top:118.0px;color:#6F6F6F;transform:scaleX(0.8600);">0</span>
<span class="ms" style="left:854.4px;top:136.0px;color:#6F6F6F;transform:scaleX(0.8532);">VendorId</span>
<span class="ms" style="left:1055.0px;top:136.0px;color:#6F6F6F;transform:scaleX(0.8528);">4801360</span>
<span class="ms" style="left:854.4px;top:154.0px;color:#6F6F6F;transform:scaleX(0.8401);">ProductCode</span>
<span class="ms" style="left:1055.0px;top:154.0px;color:#6F6F6F;transform:scaleX(0.8559);">2060</span>
<span class="ms" style="left:854.4px;top:172.0px;color:#6F6F6F;transform:scaleX(0.8495);">RevisionNo</span>
<span class="ms" style="left:1055.0px;top:172.0px;color:#6F6F6F;transform:scaleX(0.8600);">2</span>
<span class="ms" style="left:854.4px;top:190.0px;color:#6F6F6F;transform:scaleX(0.7861);">Alias</span>
<span class="ms" style="left:1055.0px;top:190.0px;color:#6F6F6F;transform:scaleX(0.8600);">1</span>
<span class="ms" style="left:336.9px;top:296.0px;color:#000;transform:scaleX(0.8247);">???</span>
<span class="ms" style="left:433.4px;top:296.0px;color:#000;transform:scaleX(0.8334);">Digital Outputs.Ou...</span>
<span class="ms" style="left:533.2px;top:296.0px;color:#000;transform:scaleX(0.8205);">BOOL</span>
<span class="ms" style="left:633.4px;top:296.0px;color:#000;transform:scaleX(0.8600);">0</span>
<span class="ms" style="left:733.2px;top:296.0px;color:#000;transform:scaleX(0.8421);">Output</span>
<span class="ms" style="left:833.2px;top:296.0px;color:#000;transform:scaleX(0.8600);">0</span>
<span class="ms" style="left:933.2px;top:296.0px;color:#000;transform:scaleX(0.8600);">1</span>
<span class="ms" style="left:336.9px;top:314.0px;color:#000;transform:scaleX(0.8247);">???</span>
<span class="ms" style="left:433.4px;top:314.0px;color:#000;transform:scaleX(0.8334);">Digital Outputs.Ou...</span>
<span class="ms" style="left:533.2px;top:314.0px;color:#000;transform:scaleX(0.8205);">BOOL</span>
<span class="ms" style="left:633.4px;top:314.0px;color:#000;transform:scaleX(0.8600);">1</span>
<span class="ms" style="left:733.2px;top:314.0px;color:#000;transform:scaleX(0.8421);">Output</span>
<span class="ms" style="left:833.2px;top:314.0px;color:#000;transform:scaleX(0.8600);">1</span>
<span class="ms" style="left:933.2px;top:314.0px;color:#000;transform:scaleX(0.8600);">1</span>
<span class="ms" style="left:336.9px;top:332.0px;color:#000;transform:scaleX(0.8247);">???</span>
<span class="ms" style="left:433.4px;top:332.0px;color:#000;transform:scaleX(0.8334);">Digital Outputs.Ou...</span>
<span class="ms" style="left:533.2px;top:332.0px;color:#000;transform:scaleX(0.8205);">BOOL</span>
<span class="ms" style="left:633.4px;top:332.0px;color:#000;transform:scaleX(0.8600);">2</span>
<span class="ms" style="left:733.2px;top:332.0px;color:#000;transform:scaleX(0.8421);">Output</span>
<span class="ms" style="left:833.2px;top:332.0px;color:#000;transform:scaleX(0.8600);">2</span>
<span class="ms" style="left:933.2px;top:332.0px;color:#000;transform:scaleX(0.8600);">1</span>
<span class="ms" style="left:336.9px;top:350.0px;color:#000;transform:scaleX(0.8247);">???</span>
<span class="ms" style="left:433.4px;top:350.0px;color:#000;transform:scaleX(0.8334);">Digital Outputs.Ou...</span>
<span class="ms" style="left:533.2px;top:350.0px;color:#000;transform:scaleX(0.8205);">BOOL</span>
<span class="ms" style="left:633.4px;top:350.0px;color:#000;transform:scaleX(0.8600);">3</span>
<span class="ms" style="left:733.2px;top:350.0px;color:#000;transform:scaleX(0.8421);">Output</span>
<span class="ms" style="left:833.2px;top:350.0px;color:#000;transform:scaleX(0.8600);">3</span>
<span class="ms" style="left:933.2px;top:350.0px;color:#000;transform:scaleX(0.8600);">1</span>
<span class="ms" style="left:336.9px;top:368.0px;color:#000;transform:scaleX(0.8247);">???</span>
<span class="ms" style="left:433.4px;top:368.0px;color:#000;transform:scaleX(0.8334);">Digital Outputs.Ou...</span>
<span class="ms" style="left:533.2px;top:368.0px;color:#000;transform:scaleX(0.8205);">BOOL</span>
<span class="ms" style="left:633.4px;top:368.0px;color:#000;transform:scaleX(0.8600);">4</span>
<span class="ms" style="left:733.2px;top:368.0px;color:#000;transform:scaleX(0.8421);">Output</span>
<span class="ms" style="left:833.2px;top:368.0px;color:#000;transform:scaleX(0.8600);">4</span>
<span class="ms" style="left:933.2px;top:368.0px;color:#000;transform:scaleX(0.8600);">1</span>
<span class="ms" style="left:336.9px;top:386.0px;color:#000;transform:scaleX(0.8247);">???</span>
<span class="ms" style="left:433.4px;top:386.0px;color:#000;transform:scaleX(0.8334);">Digital Outputs.Ou...</span>
<span class="ms" style="left:533.2px;top:386.0px;color:#000;transform:scaleX(0.8205);">BOOL</span>
<span class="ms" style="left:633.4px;top:386.0px;color:#000;transform:scaleX(0.8600);">5</span>
<span class="ms" style="left:733.2px;top:386.0px;color:#000;transform:scaleX(0.8421);">Output</span>
<span class="ms" style="left:833.2px;top:386.0px;color:#000;transform:scaleX(0.8600);">5</span>
<span class="ms" style="left:933.2px;top:386.0px;color:#000;transform:scaleX(0.8600);">1</span>
<span class="ms" style="left:336.9px;top:404.0px;color:#000;transform:scaleX(0.8247);">???</span>
<span class="ms" style="left:433.4px;top:404.0px;color:#000;transform:scaleX(0.8490);">Digital Inputs.Inpu...</span>
<span class="ms" style="left:533.2px;top:404.0px;color:#000;transform:scaleX(0.8205);">BOOL</span>
<span class="ms" style="left:633.4px;top:404.0px;color:#000;transform:scaleX(0.8600);">6</span>
<span class="ms" style="left:733.2px;top:404.0px;color:#000;transform:scaleX(0.8633);">Input</span>
<span class="ms" style="left:833.2px;top:404.0px;color:#000;transform:scaleX(0.8600);">8</span>
<span class="ms" style="left:933.2px;top:404.0px;color:#000;transform:scaleX(0.8600);">1</span>
<span class="ms" style="left:336.9px;top:422.0px;color:#000;transform:scaleX(0.8247);">???</span>
<span class="ms" style="left:433.4px;top:422.0px;color:#000;transform:scaleX(0.8490);">Digital Inputs.Inpu...</span>
<span class="ms" style="left:533.2px;top:422.0px;color:#000;transform:scaleX(0.8205);">BOOL</span>
<span class="ms" style="left:633.4px;top:422.0px;color:#000;transform:scaleX(0.8600);">7</span>
<span class="ms" style="left:733.2px;top:422.0px;color:#000;transform:scaleX(0.8633);">Input</span>
<span class="ms" style="left:833.2px;top:422.0px;color:#000;transform:scaleX(0.8600);">9</span>
<span class="ms" style="left:933.2px;top:422.0px;color:#000;transform:scaleX(0.8600);">1</span>
<span class="ms" style="left:336.9px;top:440.0px;color:#000;transform:scaleX(0.8247);">???</span>
<span class="ms" style="left:433.4px;top:440.0px;color:#000;transform:scaleX(0.8490);">Digital Inputs.Inpu...</span>
<span class="ms" style="left:533.2px;top:440.0px;color:#000;transform:scaleX(0.8205);">BOOL</span>
<span class="ms" style="left:633.4px;top:440.0px;color:#000;transform:scaleX(0.8600);">8</span>
<span class="ms" style="left:733.2px;top:440.0px;color:#000;transform:scaleX(0.8633);">Input</span>
<span class="ms" style="left:833.2px;top:440.0px;color:#000;transform:scaleX(0.8600);">10</span>
<span class="ms" style="left:933.2px;top:440.0px;color:#000;transform:scaleX(0.8600);">1</span>
<span class="ms" style="left:336.9px;top:458.0px;color:#000;transform:scaleX(0.8247);">???</span>
<span class="ms" style="left:433.4px;top:458.0px;color:#000;transform:scaleX(0.8490);">Digital Inputs.Inpu...</span>
<span class="ms" style="left:533.2px;top:458.0px;color:#000;transform:scaleX(0.8205);">BOOL</span>
<span class="ms" style="left:633.4px;top:458.0px;color:#000;transform:scaleX(0.8600);">9</span>
<span class="ms" style="left:733.2px;top:458.0px;color:#000;transform:scaleX(0.8633);">Input</span>
<span class="ms" style="left:833.2px;top:458.0px;color:#000;transform:scaleX(0.8600);">11</span>
<span class="ms" style="left:933.2px;top:458.0px;color:#000;transform:scaleX(0.8600);">1</span>
<span class="ms" style="left:336.9px;top:476.0px;color:#000;transform:scaleX(0.8247);">???</span>
<span class="ms" style="left:433.4px;top:476.0px;color:#000;transform:scaleX(0.8490);">Digital Inputs.Inpu...</span>
<span class="ms" style="left:533.2px;top:476.0px;color:#000;transform:scaleX(0.8205);">BOOL</span>
<span class="ms" style="left:633.4px;top:476.0px;color:#000;transform:scaleX(0.8600);">10</span>
<span class="ms" style="left:733.2px;top:476.0px;color:#000;transform:scaleX(0.8633);">Input</span>
<span class="ms" style="left:833.2px;top:476.0px;color:#000;transform:scaleX(0.8600);">12</span>
<span class="ms" style="left:933.2px;top:476.0px;color:#000;transform:scaleX(0.8600);">1</span>
<span style="position:absolute;left:49.5px;top:171.5px;font-size:14px;line-height:18px;font-weight:bold;color:#1F4FCF;white-space:pre;letter-spacing:0.5px">§<span style="font-size:12.5px">g</span></span>
<div style="position:absolute;left:308px;top:488px;width:1057px;height:3px;background:#34456A;"></div>
<div style="position:absolute;left:308px;top:490px;width:69px;height:1px;background:#FFF3D2;"></div>
<div style="position:absolute;left:378px;top:489px;width:156px;height:2px;background:#FFECB8;"></div>
</div>
</div></body></html>
